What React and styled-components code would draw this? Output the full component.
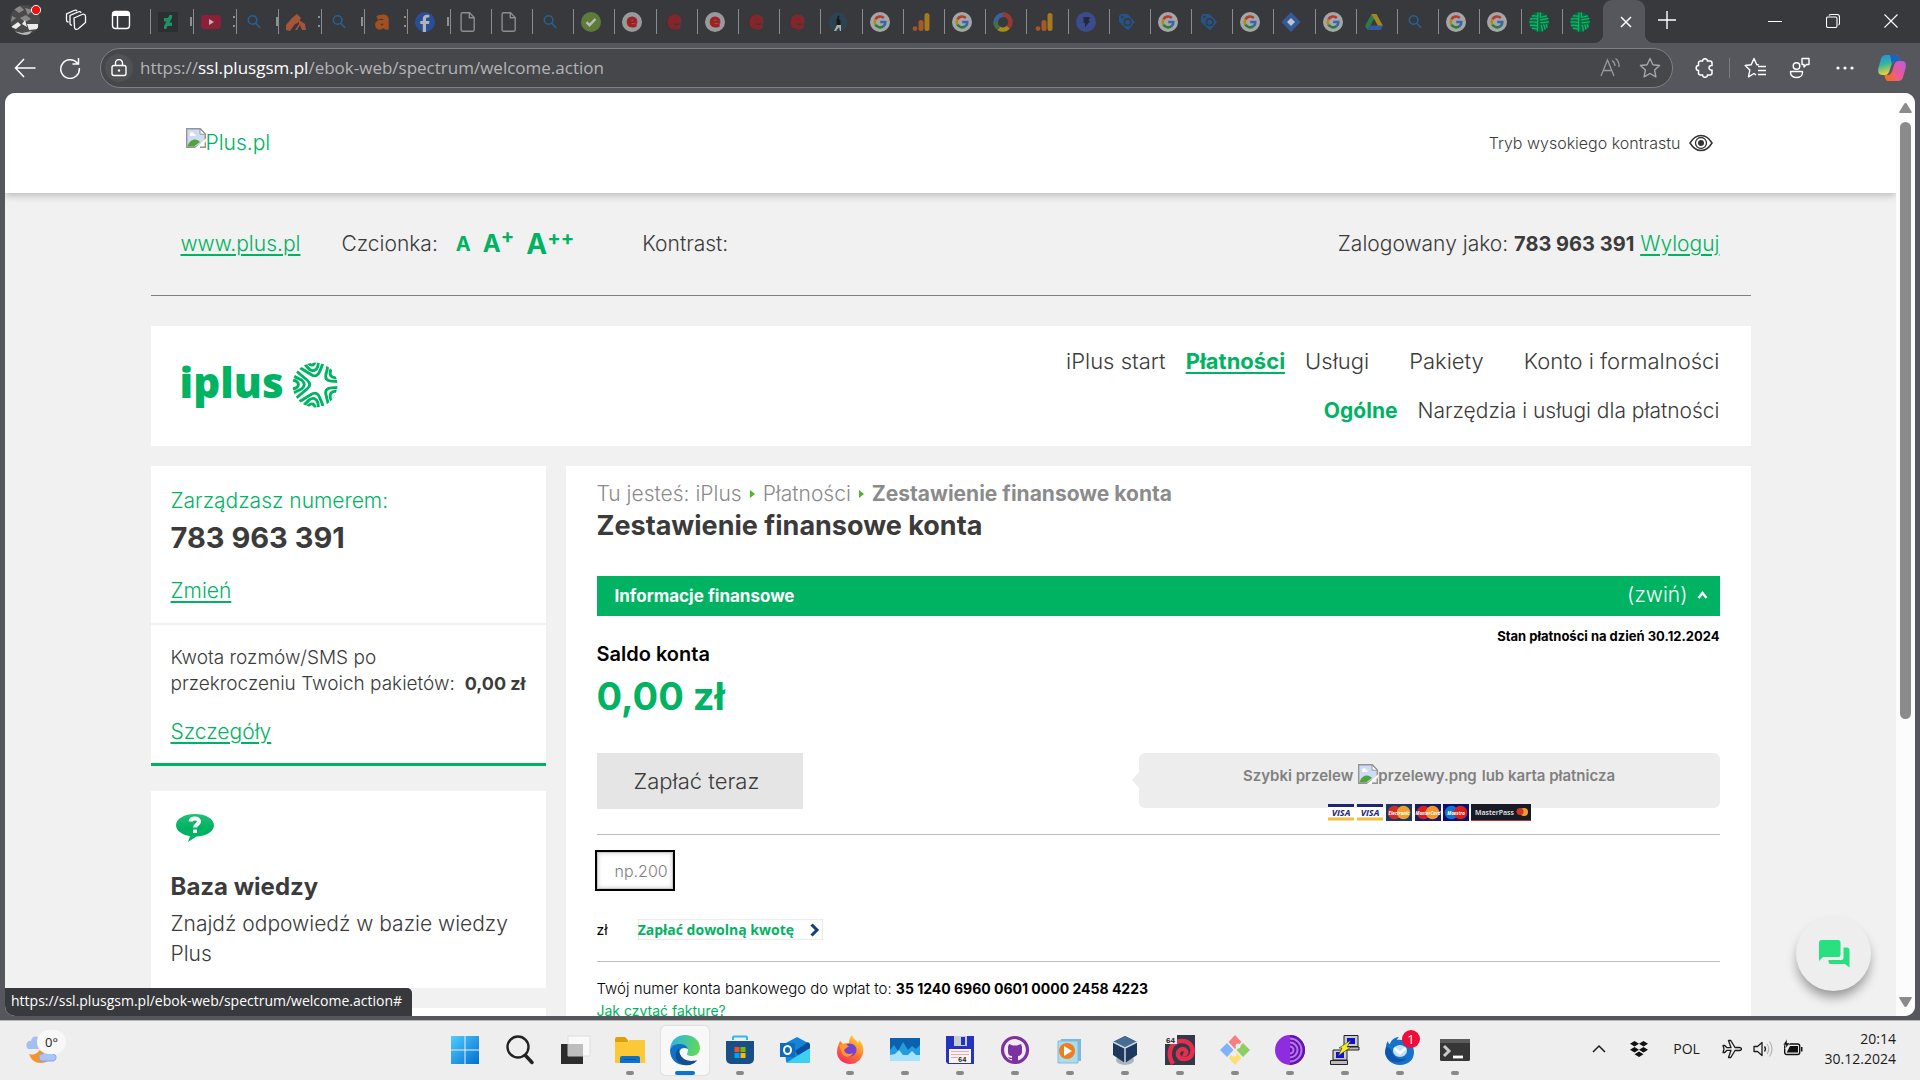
import React from "react";
import styled, { createGlobalStyle, css } from "styled-components";

const green = "#00b362";
const ink = "#3b3b3b";
const webFont = 'Inter, "Open Sans", sans-serif';
const systemFont = '"Open Sans", "Noto Sans", sans-serif';

const GlobalStyle = createGlobalStyle`
  *, *::before, *::after { box-sizing: border-box; }
  body { margin: 0; background: #56575c; font-family: ${webFont}; color: ${ink}; overflow: hidden; }
  h1, h2, p, ul { margin: 0; padding: 0; }
  b { font-weight: 700; }
  button { border: 0; padding: 0; margin: 0; background: none; color: inherit; font: inherit; cursor: pointer; }
  svg { display: block; flex: none; }
`;

/* ---------- window ---------- */

const Desktop = styled.div`
  display: flex;
  flex-direction: column;
  height: 100vh;
  background: #56575c;
`;

const TabStrip = styled.div`
  display: flex;
  flex: none;
  height: 43px;
  background: #38393d;
  color: #fff;
`;

const StripTools = styled.div`
  display: flex;
  align-items: center;
  flex: none;
  width: 150px;
  height: 40px;
  padding-left: 9px;
  gap: 24px;
`;

const Tabs = styled.div`
  display: flex;
  flex: 0 1 1453px;
  min-width: 0;
`;

const Tab = styled.button`
  display: flex;
  align-items: center;
  flex: ${(p) => (p.$wide ? 43 : 41)} 1 0;
  min-width: 0;
  height: 25px;
  margin-top: 9px;
  padding-left: 7px;
  gap: 12px;
  border-left: 1px solid #8b8c8f;
`;

const ActiveTab = styled.button`
  position: relative;
  display: grid;
  place-items: center;
  flex: none;
  width: 42px;
  height: 43px;
  padding-left: 3px;
  border-radius: 9px 9px 0 0;
  background: #56575c;
  &::before, &::after {
    content: "";
    position: absolute;
    bottom: 0;
    width: 9px;
    height: 9px;
  }
  &::before { left: -9px; background: radial-gradient(circle at 0 0, #38393d 9px, #56575c 9px); }
  &::after { right: -9px; background: radial-gradient(circle at 100% 0, #38393d 9px, #56575c 9px); }
`;

const NewTab = styled.button`
  display: grid;
  place-items: center;
  width: 44px;
  height: 40px;
`;

const WindowButtons = styled.div`
  display: flex;
  margin-left: auto;
  height: 42px;
`;

const WindowButton = styled.button`
  display: grid;
  place-items: center;
  width: 58px;
`;

const Toolbar = styled.div`
  display: flex;
  align-items: center;
  flex: none;
  height: 50px;
  color: #fff;
  font-family: ${systemFont};
`;

const NavButton = styled.button`
  display: grid;
  place-items: center;
  width: 45px;
  height: 40px;
  &:first-child { margin-left: 2px; }
  &:nth-child(2) { margin-right: 8px; }
`;

const AddressBar = styled.div`
  display: flex;
  align-items: center;
  flex: 1;
  height: 40px;
  padding: 0 2px 0 4px;
  border: 1px solid #808185;
  border-radius: 20px;
  background: #46474b;
`;

const SiteInfo = styled.button`
  display: grid;
  place-items: center;
  width: 28px;
  height: 28px;
  border-radius: 50%;
  background: #505155;
`;

const Url = styled.div`
  flex: 1;
  margin-left: 7px;
  font-size: 17px;
  line-height: 24px;
  color: #b4b4b5;
  b { color: #fff; font-weight: 400; }
`;

const PillButton = styled.button`
  display: grid;
  place-items: center;
  width: 40px;
  height: 34px;
`;

const ToolbarEnd = styled.div`
  display: flex;
  align-items: center;
  padding: 0 3px 0 9px;
`;

const ToolbarButton = styled.button`
  display: grid;
  place-items: center;
  width: ${(p) => p.$w || 45}px;
  height: 40px;
`;

const Separator = styled.span`
  width: 1px;
  height: 20px;
  background: #7b7c80;
  margin: 0 2px;
`;

const Viewport = styled.div`
  position: relative;
  display: flex;
  flex: 1;
  min-height: 0;
  margin: 0 5px;
  border-radius: 10px;
  overflow: hidden;
  background: #f1f1f1;
`;

const Page = styled.div`
  flex: 1;
  min-width: 0;
  overflow: hidden;
  font-weight: 300;
`;

const ScrollBar = styled.div`
  display: flex;
  flex-direction: column;
  align-items: center;
  flex: none;
  width: 19px;
  padding: 10px 0 9px;
  background: #fcfcfc;
`;

const Thumb = styled.div`
  width: 11px;
  height: 66%;
  margin: 9px 0 auto;
  border-radius: 6px;
  background: #8b8b8b;
`;

const StatusBubble = styled.div`
  position: absolute;
  left: 0;
  bottom: 0;
  height: 28px;
  padding: 0 10px 0 6px;
  border-radius: 0 5px 0 8px;
  background: #38393d;
  color: #fff;
  font: 14px/26px ${systemFont};
`;

const ChatButton = styled.button`
  position: absolute;
  right: 44px;
  bottom: 25px;
  display: grid;
  place-items: center;
  width: 75px;
  height: 75px;
  border-radius: 50%;
  background: #eeeeee;
  box-shadow: 0 8px 12px -2px rgba(0, 0, 0, 0.4);
`;

/* ---------- portal page ---------- */

const Container = styled.div`
  width: 1600px;
  max-width: 100%;
  margin: 0 auto;
`;

const Header = styled.header`
  position: relative;
  background: #fff;
  box-shadow: 0 2px 8px rgba(0, 0, 0, 0.25);
`;

const HeaderRow = styled(Container)`
  display: flex;
  align-items: center;
  justify-content: space-between;
  height: 100px;
  padding: 0 38px 0 35px;
`;

const BrokenImage = styled.span`
  display: inline-flex;
  align-items: flex-start;
  white-space: nowrap;
`;

const HomeLink = styled.a`
  display: flex;
  color: ${green};
  font-size: 21px;
  line-height: 30px;
  text-decoration: none;
`;

const ContrastMode = styled.button`
  display: flex;
  align-items: center;
  gap: 8px;
  font-size: 16px;
  line-height: 24px;
`;

const UtilityRow = styled(Container)`
  display: flex;
  align-items: center;
  height: 103px;
  padding: 0 31px 0 30px;
  border-bottom: 1px solid #7f8281;
  font-size: 21px;
  line-height: 30px;
`;

const GreenLink = styled.a`
  color: ${green};
  text-decoration: underline;
  text-underline-offset: 3px;
`;

const FontSizes = styled.div`
  display: flex;
  align-items: center;
  margin: 0 68px 0 41px;
`;

const FontSize = styled.button`
  margin-left: ${(p) => p.$gap}px;
  color: ${green};
  font-weight: 700;
  font-size: ${(p) => p.$size}px;
  line-height: 30px;
  sup { font-size: 20px; line-height: 0; vertical-align: 9px; }
`;

const Session = styled.div`
  margin-left: auto;
  b { font-size: 20px; }
`;

const Banner = styled(Container)`
  display: flex;
  justify-content: space-between;
  margin-top: 30px;
  padding: 20px 31px 20px 29px;
  background: #fff;
`;

const Logo = styled.a`
  display: flex;
  align-items: center;
  gap: 8px;
  height: 77px;
  color: ${green};
  font: 800 42px/60px "Open Sans", "Noto Sans", sans-serif;
  text-decoration: none;
  span { height: 66px; }
`;

const NavStack = styled.nav`
  display: flex;
  flex-direction: column;
  align-items: flex-end;
  gap: 20px;
  font-size: 21px;
`;

const NavRow = styled.div`
  display: flex;
  gap: ${(p) => p.$gap || 20}px;
  ${(p) => p.$main && css`font-size: 22px;`}
`;

const NavLink = styled.a`
  color: ${ink};
  line-height: 30px;
  text-decoration: none;
  ${(p) => p.$active && css`color: ${green}; font-weight: 700;`}
  ${(p) => p.$underline && css`text-decoration: underline; text-underline-offset: 3px;`}
`;

const Columns = styled(Container)`
  display: grid;
  grid-template-columns: 395px minmax(0, 1fr);
  gap: 20px;
  margin-top: 20px;
`;

const Sidebar = styled.aside`
  display: flex;
  flex-direction: column;
`;

const SideBox = styled.section`
  padding: 20px 20px ${(p) => p.$bottom || 16}px;
  margin-bottom: ${(p) => p.$after || 0}px;
  background: #fff;
  font-size: 21px;
  line-height: 30px;
  ${(p) => p.$closing && css`border-bottom: 3px solid ${green};`}
`;

const GreenText = styled.p`
  color: ${green};
`;

const PhoneNumber = styled.p`
  margin-bottom: 16px;
  font-size: 29px;
  font-weight: 700;
  line-height: 44px;
`;

const Overage = styled.div`
  display: flex;
  align-items: flex-end;
  justify-content: space-between;
  margin-bottom: 20px;
  font-size: 19px;
  line-height: 26px;
  b { white-space: nowrap; font-size: 18px; }
`;

const SideTitle = styled.h2`
  margin: 27px 0 7px;
  font-size: 24px;
  font-weight: 700;
  line-height: 30px;
`;

const Main = styled.main`
  padding: 13px 31px 0;
  background: #fff;
`;

const Breadcrumbs = styled.nav`
  display: flex;
  align-items: center;
  gap: 8px;
  color: #8b8b8b;
  font-size: 21px;
  line-height: 30px;
  a { color: inherit; text-decoration: none; }
`;

const Title = styled.h1`
  margin-bottom: 33px;
  font-size: 27px;
  font-weight: 700;
  line-height: 34px;
`;

const SectionBar = styled.div`
  display: flex;
  align-items: center;
  justify-content: space-between;
  height: 40px;
  padding: 0 12px 0 18px;
  background: ${green};
  color: #fff;
`;

const SectionTitle = styled.h2`
  font-size: 17px;
  font-weight: 700;
  line-height: 24px;
`;

const Collapse = styled.button`
  display: flex;
  align-items: center;
  gap: 9px;
  padding-bottom: 2px;
  font-size: 21px;
  font-weight: 300;
  line-height: 24px;
`;

const BalanceRow = styled.div`
  display: flex;
  align-items: flex-start;
  justify-content: space-between;
  padding-top: 10px;
  margin-bottom: 33px;
  color: #000;
`;

const Balance = styled.div`
  padding-top: 14px;
  font-weight: 700;
`;

const BalanceLabel = styled.p`
  font-size: 20px;
  line-height: 28px;
  font-weight: 600;
`;

const BalanceValue = styled.p`
  margin-top: 4px;
  color: ${green};
  font-size: 38px;
  line-height: 48px;
`;

const AsOf = styled.p`
  font-size: 13px;
  font-weight: 700;
  line-height: 20px;
`;

const PayRow = styled.div`
  display: flex;
  align-items: flex-start;
  justify-content: space-between;
  padding-bottom: 13px;
  border-bottom: 1px solid #bcbcbc;
`;

const PayButton = styled.button`
  width: 206px;
  height: 56px;
  padding-right: 6px;
  background: #e5e5e5;
  color: ${ink};
  font-size: 22px;
`;

const Methods = styled.div`
  display: flex;
  flex-direction: column;
  align-items: center;
  width: 581px;
`;

const Bubble = styled.div`
  position: relative;
  display: flex;
  align-items: flex-start;
  justify-content: center;
  width: 100%;
  height: 55px;
  padding-top: 11px;
  border-radius: 6px;
  background: #ededed;
  color: #808080;
  font-size: 15px;
  font-weight: 600;
  line-height: 24px;
  gap: 5px;
  &::before {
    content: "";
    position: absolute;
    left: -7px;
    top: 19px;
    border: solid transparent;
    border-width: 8px 7px 8px 0;
    border-right-color: #ededed;
  }
`;

const CardLogos = styled.div`
  position: relative;
  margin-top: -4px;
`;

const AmountField = styled.input`
  display: block;
  width: 76px;
  height: 37px;
  margin: 17px 0 30px;
  padding: 0 0 0 17px;
  border: 1px solid #c8c8c8;
  outline: 2px solid #000;
  box-shadow: inset 0 0 4px #ccc;
  background: #fff;
  color: #808080;
  font: 300 16px/20px ${webFont};
`;

const AmountRow = styled.div`
  display: flex;
  align-items: center;
  gap: 30px;
  padding-bottom: 21px;
  border-bottom: 1px solid #bcbcbc;
  color: #000;
  font-size: 14px;
  font-weight: 400;
  line-height: 21px;
`;

const PayAny = styled.button`
  display: flex;
  align-items: center;
  gap: 16px;
  height: 21px;
  padding-right: 3px;
  box-shadow: inset 0 0 2px #bbb;
  color: ${green};
  font: 700 14px/20px ${systemFont};
`;

const Account = styled.div`
  padding-top: 16px;
  color: #000;
  font-size: 14px;
  font-weight: 400;
  line-height: 22px;
  p { font-size: 15px; font-weight: 300; }
  b { font-size: 14px; }
`;

/* ---------- taskbar ---------- */

const Taskbar = styled.footer`
  display: grid;
  grid-template-columns: 1fr auto 1fr;
  flex: none;
  height: 60px;
  margin-top: 4px;
  border-top: 1px solid #b5b5b7;
  background: #eeeeee;
  color: #1b1b1b;
  font-family: ${systemFont};
`;

const Weather = styled.button`
  display: flex;
  align-items: flex-start;
  justify-self: start;
  padding: 9px 0 0 26px;
`;

const Apps = styled.div`
  display: flex;
  gap: 7px;
  padding-top: 5px;
`;

const TaskButton = styled.button`
  display: flex;
  flex-direction: column;
  align-items: center;
  justify-content: space-between;
  width: 48px;
  height: 49px;
  padding-top: 9px;
  border-radius: 5px;
  ${(p) => p.$active && css`background: #f8f8f8; box-shadow: 0 0 1px 1px #e0e0e0;`}
  &::after {
    content: "";
    width: ${(p) => (p.$active ? 20 : 8)}px;
    height: 4px;
    border-radius: 2px;
    background: ${(p) => (p.$active ? "#0a74d1" : p.$open ? "#888" : "transparent")};
  }
`;

const Tray = styled.div`
  display: flex;
  align-items: center;
  justify-self: end;
  padding: 0 24px 4px 0;
`;

const TrayButton = styled.button`
  display: grid;
  place-items: center;
  width: ${(p) => p.$w}px;
  height: 40px;
  font-size: 14px;
`;

const Clock = styled.button`
  margin-left: 16px;
  text-align: right;
  font-size: 14px;
  line-height: 20px;
`;

/* ---------- drawings ---------- */

const Svg = ({ w = 20, h = w, box, children, ...rest }) => (
  <svg width={w} height={h} viewBox={box || `0 0 ${w} ${h}`} fill="none" aria-hidden="true" {...rest}>
    {children}
  </svg>
);

const Google = () => (
  <>
    <circle cx="10" cy="10" r="10" fill="#a5a6a7" />
    <g strokeWidth="2.6">
      <path d="M5.4 7.3A5.4 5.4 0 0 1 13.8 6" stroke="#b53a30" />
      <path d="M5.4 7.3a5.6 5.6 0 0 0 0 5.4" stroke="#b28a1c" />
      <path d="M5.4 12.7a5.4 5.4 0 0 0 8.2 1.4" stroke="#2c7c41" />
      <path d="M13.6 14.1A5.3 5.3 0 0 0 15.3 10H10.2" stroke="#3566b0" />
    </g>
  </>
);
const Analytics = () => (
  <>
    <rect x="13.5" y="1" width="5" height="18" rx="2.5" fill="#a5791d" />
    <rect x="7.5" y="8" width="5" height="11" rx="2.5" fill="#a55a25" />
    <circle cx="4" cy="16.6" r="2.4" fill="#a5532a" />
  </>
);
const Find = () => (
  <g stroke="#28608f" strokeWidth="1.6" strokeLinecap="round">
    <circle cx="8.6" cy="8" r="4.3" />
    <path d="M11.8 11.3l4 4.2" />
  </g>
);
const Doc = () => <path d="M4.5.8h7l4.7 4.8v12.2a1.4 1.4 0 0 1-1.4 1.4H4.5a1.4 1.4 0 0 1-1.4-1.4V2.2A1.4 1.4 0 0 1 4.5.8zM11.3 1v4.8H16" stroke="#8c8d90" strokeWidth="1.4" />;
const Letter = ({ y, size, fill, children }) => (
  <text x="10" y={y} fontSize={size} fontWeight="800" textAnchor="middle" fill={fill} stroke={fill} strokeWidth=".8" fontFamily="Open Sans, sans-serif">{children}</text>
);
const EBadge = () => (<><circle cx="10" cy="10" r="10" fill="#999a9c" /><Letter y={15} size={18} fill="#9d2025">e</Letter></>);
const Tag = () => (
  <>
    <path d="M2 4l2-2h6.5l7.5 8-6.5 8-1.5-.5L2 10z" fill="#265489" />
    <circle cx="10.6" cy="10.2" r="3.3" stroke="#38393d" strokeWidth="1.6" />
    <circle cx="5.3" cy="5" r="1.2" fill="#38393d" />
  </>
);
const PlusGlobe = () => (
  <>
    <circle cx="10" cy="10" r="10" fill="#096b40" />
    <g stroke="#12b46a" strokeWidth="1.3">
      <path d="M9 .5c-.5 5-.3 8-.5 19M1 7c3-.5 5-.5 7.5 0M.5 10c3-.5 5-.2 8 .4M1 13.500c3-.6 5-.2 7.500.6M3 16.500c2-.3 4 0 5.500.8M3 4c2-.4 4-.2 6 .4M11.500.5c-.3 2-.2 3-.1 4.800L18 3.800M11.300 8l8-1.700M11.300 10.800l8.500-.9M12 13c1 2 1.500 4 1.300 6.400M14.500 12.500c1 1.500 1.500 3 1.500 5M17 12.300c.7 1 1 2 1 3.500" />
    </g>
  </>
);

const favicons = {
  deviant: <><rect width="20" height="20" fill="#2c2e31" /><path d="M14 3v3l-2.600 4.600H14V14H9.500L8.300 17H6v-3l2.500-4.500H6V6h4l1.500-3z" fill="#1f9167" /></>,
  youtube: <><rect y="3" width="20" height="14" rx="4" fill="#8d2038" /><path d="M8 7v6l5-3z" fill="#b5b5b5" /></>,
  find: <Find />,
  house: <path d="M0 18V13l6-7 5-4 4 4-3 5-3 1-5 7zM13 8l6 4 1 6h-4l-2-5-3 5H9l4-6z" fill="#a75437" />,
  amazon: <Letter y={17} size={24} fill="#a25020">a</Letter>,
  facebook: <><circle cx="10" cy="10" r="10" fill="#284f95" /><path d="M11 20v-8h3l.5-3H11V7.200c0-1 .5-1.600 1.700-1.600h1.600V3.100c-3.800-.8-6.500.4-6.500 3.800V9H5.300v3h2.500v8z" fill="#b2b4b8" /></>,
  doc: <Doc />,
  check: <><circle cx="10" cy="10" r="10" fill="#5e7b39" /><path d="M5.500 10.200l3 3 6-6.200" stroke="#b9bdb4" strokeWidth="2.400" /></>,
  ebadge: <EBadge />,
  e: <Letter y={17} size={24} fill="#85252b">e</Letter>,
  person: <><circle cx="10" cy="10" r="9.500" fill="#2d4450" /><path d="M10 3.500a1.500 1.500 0 1 1 0 3 3 3 0 0 1 2.500 3V13H8.500V8z" fill="#17191b" /><path d="M9 13l-3 6h2l3-4 1 4h1V13z" fill="#b1aea6" /></>,
  google: <Google />,
  analytics: <Analytics />,
  ring: <g strokeWidth="4.500"><path d="M3 12a7.500 7.500 0 0 1 9-9" stroke="#3a6298" /><path d="M10 2.500a7.500 7.500 0 0 1 5.500 12.500" stroke="#9b3732" /><path d="M15.300 15.300a7.500 7.500 0 0 1-9.600 1" stroke="#a98a1d" /><path d="M5.900 16.300A7.500 7.500 0 0 1 2.500 10" stroke="#457142" /></g>,
  bolt: <><circle cx="10" cy="10" r="10" fill="#3b4c8d" /><path d="M7.500 5h6.500l-1.500 4H14L9 15.500v-4.500H7.500z" fill="#25283a" /></>,
  tag: <Tag />,
  diamond: <><path d="M10 0l9.500 10L10 20 .5 10z" fill="#35599b" /><path d="M10 6l4 4-4 4-4-4z" fill="#c0c3c9" /></>,
  drive: <><path d="M7.500 2h5L6 14.500 3.500 18 1 14z" fill="#2f7a49" /><path d="M7.500 2h5L19 14h-5z" fill="#a58625" /><path d="M6 13.500h13L16.500 18h-13z" fill="#33599d" /></>,
  plus: <PlusGlobe />,
};

const tabs = [
  ["deviant", 1], ["youtube", 1], ["find", 1], ["house", 1], ["find", 1], ["amazon", 1], ["facebook", 1],
  ..."doc doc find check ebadge e ebadge e e person google analytics google ring analytics bolt tag google tag google diamond google drive find google google plus plus"
    .split(" ").map((n) => [n, 0]),
];

const PageIcon = ({ size = 20 }) => (
  <Svg w={size} box="0 0 20 20">
    <path d="M.7.7h13.600L19.300 6v7L9 19.300H.7z" fill="#cfdcf5" stroke="#949494" strokeWidth="1.400" />
    <path d="M14 1v5.200h5.200z" fill="#fff" stroke="#949494" />
    <path d="M4 6.500a2 2 0 0 1 4-.6 1.500 1.500 0 0 1 1.500 2H4z" fill="#fff" />
    <path d="M1.500 18.500c1.500-5 4-7 7.500-7 2 0 3.500 1 5 2.500l-6 4.500z" fill="#52a43a" />
    <path d="M9 20L20 10.500V13l-7 7z" fill="#fff" />
    <path d="M14 19.300h5.300V14.500" stroke="#949494" strokeWidth="1.400" />
  </Svg>
);

const Eye = () => (
  <Svg w={24} h={18}>
    <path d="M1 9c6-10 16-10 22 0-6 10-16 10-22 0z" stroke="#333" strokeWidth="1.500" />
    <circle cx="12" cy="9" r="5.500" stroke="#333" strokeWidth="1.300" />
    <circle cx="12" cy="9" r="3" fill="#333" />
  </Svg>
);

const LogoGlobe = () => (
  <Svg w={46} h={46}>
    <clipPath id="globe"><circle cx="23" cy="23" r="22.500" /></clipPath>
    <g clipPath="url(#globe)" stroke={green} strokeWidth="2.900">
      {[54, 126, 198, 270, 342].map((a) => (
        <g key={a} transform={`translate(27 22.500) rotate(${a})`}>
          <path d="M-18-28L-4.500-12Q0-6.500 4.500-12L18-28" />
          <path d="M-13-31Q-8-26-4.500-17.500Q0-12 4.500-17.500Q8-26 13-31" />
          <path d="M-8-34Q-5-28-3.500-23Q0-18 3.500-23Q5-28 8-34" />
        </g>
      ))}
    </g>
  </Svg>
);

const HelpBubble = () => (
  <Svg w={48} h={34}>
    <defs><linearGradient id="help" x2="0" y2="1"><stop stopColor="#23bf78" /><stop offset=".5" stopColor={green} /></linearGradient></defs>
    <path d="M24 3c10.500 0 19 4.800 19 11.300 0 6.200-8 11.200-17.500 11.200L17 31l2-5.800C11 24 5 19.500 5 14.300 5 7.800 13.500 3 24 3z" fill="url(#help)" />
    <path d="M19.500 10.500c.5-4 8.500-4 8.500 0 0 3-4 3-4 6M24 18.500v3.500" stroke="#fff" strokeWidth="4" />
  </Svg>
);

const CardLabel = ({ x, y, fill = "#fff", size = 6, children }) => (
  <text x={x} y={y} fill={fill} fontSize={size} fontWeight="700" fontStyle="italic" textAnchor="middle" fontFamily="Open Sans, sans-serif">{children}</text>
);

const Cards = () => (
  <Svg w={203} h={17}>
    {[0, 29].map((x) => (
      <g key={x}>
        <path fill="#fff" d={`M${x} 0h26v17h-26z`} />
        <path fill="#1d2375" d={`M${x} 0h26v3h-26z`} />
        <path fill="#f4bd3c" d={`M${x} 13.500h26v3h-26z`} />
        <CardLabel x={x + 13} y={11.500} size={9} fill="#1d2375">VISA</CardLabel>
      </g>
    ))}
    {[[58, "#1e3764", "#d22d25", "#eda02a", "Electronic"], [87, "#1a1c6b", "#d5201f", "#f0992a", "MasterCard"], [115, "#0d0f6e", "#1672d2", "#d5201f", "Maestro"]].map(([x, bg, a, b, name]) => (
      <g key={x}>
        <path fill={bg} d={`M${x} 0h26v17h-26z`} />
        <circle cx={x + 8.500} cy="8.500" r="6.800" fill={a} />
        <circle cx={x + 17.500} cy="8.500" r="6.800" fill={b} />
        <CardLabel x={x + 13} y={10.500} size={4.500}>{name}</CardLabel>
      </g>
    ))}
    <path fill="#181a26" d="M143 0h60v17h-60z" /><path fill="#b53b2d" d="M143 16h60v1h-60z" />
    <text x="147" y="11" fill="#eee" fontSize="7" fontWeight="600" fontFamily="Open Sans, sans-serif">MasterPass</text>
    <circle cx="196" cy="8" r="4" fill="#eda02a" /><circle cx="192" cy="7.500" r="3.500" fill="#d2341f" />
  </Svg>
);

const Copilot = () => (
  <Svg w={28} h={28}>
    <defs>
      <linearGradient id="cpa" x2="0.300" y2="1"><stop stopColor="#1b8fe8" /><stop offset=".5" stopColor="#38b59d" /><stop offset="1" stopColor="#f3d32f" /></linearGradient>
      <linearGradient id="cpb" x1="1" x2="0" y2="1"><stop stopColor="#b45fe8" /><stop offset=".5" stopColor="#ea5796" /><stop offset="1" stopColor="#f97a32" /></linearGradient>
    </defs>
    <path d="M8 1h9c3 0 4 2 5 6h-4c-3 0-4 2-5 5l-2 6c-1 2-2 3-4 3H4c-4 0-4.500-4-3.300-8L3 5c.8-3 2.500-4 5-4z" fill="url(#cpa)" />
    <path d="M12 1h5c3 0 4 2 5 6h-4c-2.500 0-3.500 1-4.200 3z" fill="#1763c7" />
    <path d="M20 27h-9c-3 0-3.500-2-4.500-6H10c3 0 3.500-2 4.500-5l2-6c1-2 2-3 4-3H24c4 0 4.500 4 3.300 8L25 23c-.8 3-2.500 4-5 4z" fill="url(#cpb)" />
    <path d="M16.500 27H11c-3 0-3.500-2-4.500-6H10c2.500 0 3.300-1 4-3z" fill="#f26a37" />
  </Svg>
);

const apps = [
  ["Start", 0, <>
    <defs><linearGradient id="win" x2="1" y2="1"><stop stopColor="#52cbff" /><stop offset="1" stopColor="#0070d0" /></linearGradient></defs>
    <path d="M1 1h13.500v13.500H1zM15.500 1H29v13.500H15.500zM1 15.500h13.500V29H1zM15.500 15.500H29V29H15.500z" fill="url(#win)" />
  </>],
  ["Wyszukaj", 0, <g stroke="#222" strokeLinecap="round"><circle cx="13" cy="12" r="10.500" strokeWidth="2.400" /><path d="M20.500 20.500l6.500 7" strokeWidth="3.500" /></g>],
  ["Widok zadań", 0, <><path d="M1 9h22v20H1z" fill="#2c2c2c" /><path d="M8 1h22v20H8z" fill="#fbfbfb" opacity=".85" stroke="#ddd" /><path d="M8 9h15v12H8z" fill="#bdbdbd" /></>],
  ["Eksplorator", 1, <><path d="M0 4a2 2 0 0 1 2-2h8l3 3v6H0z" fill="#dda00b" /><path d="M0 7h12l3-2h15v23H0z" fill="#fcc835" /><path d="M5 28v-5a2 2 0 0 1 2-2h16a2 2 0 0 1 2 2v5z" fill="#0e72c9" /><path d="M9 24.500h12" stroke="#07539a" /></>],
  ["Edge", 2, <>
    <defs><linearGradient id="edge" x2="1" y1=".3" y2=".5"><stop stopColor="#2cb3e8" /><stop offset="1" stopColor="#62d956" /></linearGradient></defs>
    <path d="M0 14C1 5 7 0 15 0c9 0 15 6 15 13 0 5-4 8-8 8-4 0-5-1-5-2 0-1 1-1.500 1-4 0-3-3-5-6-5C6 10 1 12 0 14z" fill="url(#edge)" />
    <path d="M0 15c1-4 5-6 10-6 5 0 8 3 8 5-6-3-9 1-9 5 0 6 6 9 11 9 3 0 6-2 7-2.500C24 29 20 30 15 30 6 30 0 24 0 15z" fill="#1072c6" />
    <path d="M9 13c-6 6-4 14 5 17 6 1 10-1 13-5-5 2-18 2-18-12z" fill="#124f93" />
  </>],
  ["Sklep", 1, <><path d="M8 5V2.500a1 1 0 0 1 1-1h12a1 1 0 0 1 1 1V5" stroke="#2fb5f2" strokeWidth="2" /><path d="M1 6h28v18a5 5 0 0 1-5 5H6a5 5 0 0 1-5-5z" fill="#174f86" /><path d="M9.500 12h5v5h-5z" fill="#f25022" /><path d="M15.500 12h5v5h-5z" fill="#7fba00" /><path d="M9.500 18h5v5h-5z" fill="#00a4ef" /><path d="M15.500 18h5v5h-5z" fill="#ffb900" /></>],
  ["Outlook", 0, <><path d="M4 9l13-7 13 7v17a2 2 0 0 1-2 2H8a2 2 0 0 1-2-2z" fill="#1385d8" /><path d="M6 28l24-15v13a2 2 0 0 1-2 2z" fill="#3ed0f2" /><path d="M15 16l13-9 2 2v4L18 20z" fill="#0a4f9e" /><path d="M0 8h15v14H0z" fill="#0f6cbd" /><ellipse cx="7.500" cy="15" rx="3.500" ry="4" stroke="#fff" strokeWidth="2" /></>],
  ["Firefox", 1, <>
    <defs><linearGradient id="ff" x1=".8" x2=".2" y2="1"><stop stopColor="#ffdf3c" /><stop offset=".5" stopColor="#ff7a2b" /><stop offset="1" stopColor="#f0296b" /></linearGradient></defs>
    <path d="M17 0c1 4 5 5 6 8l1-3c4 4 5 8 4 13-1 6-6 11-13 11S2 24 2 17c0-5 2-8 3-11l3 3c2-1 4-1 6-1 0-3 1-6 3-8z" fill="url(#ff)" />
    <circle cx="15" cy="15" r="6.500" fill="#7543d4" /><path d="M4 10c4-2 8-1 10 2-3 0-3 2-5 3 1 4 5 5 9 3-2 5-9 5-11 0z" fill="#ff9a2a" />
  </>],
  ["Monitor", 1, <><path d="M0 3h30v23H0z" fill="#0c61ae" /><path d="M0 15l4-5 4 6 5-9 5 8 4-4 4 3 4-4v16H0z" fill="#249ddf" /><path d="M0 20l5-1 4-4 4 5 5 0 4-4 4 4h4v6H0z" fill="#a8e2fb" /></>],
  ["Total Commander", 1, <><path d="M1 1h28v28H3l-2-2z" fill="#2434c0" /><path d="M9 1h13v10H9z" fill="#c9ccd4" /><path d="M16 2h4v8h-4z" fill="#2434c0" /><path d="M4 14h22v14H4z" fill="#fbf4f2" /><path d="M6 16.500h18M6 19.500h18M6 22.500h7" stroke="#ecaaa4" /><text x="13" y="27" fontSize="7" fontWeight="700" fill="#222" fontFamily="Liberation Mono, monospace">64</text></>],
  ["GitHub", 1, <><circle cx="15" cy="15" r="12.500" fill="#f1ebf6" stroke="#7c33a0" strokeWidth="3.200" /><path d="M9 9l4 1.500h4L21 9l1 3v5c0 2-2 4-4 4v6h-6v-3c-2 .5-3-.5-4-2l4 1v-2c-3 0-4-2-4-4v-5z" fill="#7c33a0" /></>],
  ["Odtwarzacz", 1, <><path d="M6 4h20v22H6z" fill="#7db7d9" /><path d="M3 6h20v22H3z" fill="#aadcf0" stroke="#84bad5" /><circle cx="12" cy="16" r="8" fill="#f07d1c" /><path d="M9 11v10l8-5z" fill="#fff" /></>],
  ["VirtualBox", 1, <><ellipse cx="15" cy="25" rx="9" ry="5" fill="#a9b4bf" /><path d="M3 7l12-6 12 6v13l-12 8-12-8z" fill="#1e395d" /><path d="M3 7l12-6 12 6-12 6z" fill="#466c94" /><path d="M3 7l12 6v15M27 7l-12 6" stroke="#cbd6e2" strokeWidth="1.500" /></>],
  ["Ruby", 1, <><path d="M0 0h30v30H0z" fill="#333a45" /><path d="M8 29C1 18 6 6 17 6c9 0 12 8 10 13-2 6-12 7-14 1-1-5 5-8 8-4 1 2-1 4-3 3" stroke="#e52e4d" strokeWidth="4.400" /><path d="M0 0h12v9H0z" fill="#eee" /><text x="1" y="8" fontSize="8" fontWeight="700" fill="#222" fontFamily="Liberation Sans, sans-serif">64</text></>],
  ["Git", 1, <><path d="M15 0l6.500 7-6.500 7-6.500-7z" fill="#f48080" /><path d="M7 8l6.500 7L7 22 0 15z" fill="#80b1fb" /><path d="M23 8l7 7-7 7-6.500-7z" fill="#8dcf62" /><path d="M15 16l6.500 7-6.500 7-6.500-7z" fill="#fbdf76" /><circle cx="18" cy="11" r="2.500" fill="#eee" /><circle cx="14" cy="19" r="2.500" fill="#eee" /></>],
  ["Tor", 1, <><circle cx="15" cy="15" r="15" fill="#8e2de0" /><path d="M15 0a15 15 0 0 1 0 30z" fill="#6115ab" /><g stroke="#b976f0" strokeWidth="2"><path d="M15 3.500a11.500 11.500 0 0 1 0 23M15 7.500a7.500 7.500 0 0 1 0 15M15 11.500a3.500 3.500 0 0 1 0 7" /></g></>],
  ["PuTTY", 1, <><g stroke="#222"><path d="M14 .5h14v11H14z" fill="#ccc" /><path d="M12 12h17v3H12z" fill="#bbb" /><path d="M3 15h14v10H3z" fill="#ccc" /><path d="M.5 25.500h17v4H.5z" fill="#bbb" /></g><path d="M17 3h8v6h-8zM6 17h8v6H6z" fill="#1010d8" /><path d="M21 5l-4 7h4L8 21l4-8H9z" fill="#f2ef1c" stroke="#333" strokeWidth=".6" /></>],
  ["Thunderbird", 1, <><path d="M1 12c0-3 1-5 2-6 0 2 1 3 2 3 1-4 5-7 9-7-1 1-2 2-2 3 9-1 17 4 17 12 0 8-6 13-14 13S0 24 0 17z" fill="#1672cb" /><path d="M1 12c3 0 5 2 6 5 2 6 8 9 15 6-6 7-20 6-22-6z" fill="#0f55ad" /><ellipse cx="15" cy="16" rx="7" ry="6" fill="#c5e2f8" /><path d="M9 13l6 5 6-5" stroke="#fff" strokeWidth="2.500" /><circle cx="26" cy="4" r="9" fill="#f00c3b" /><text x="26" y="9" fontSize="13" textAnchor="middle" fill="#fff" fontFamily="Open Sans, sans-serif">1</text></>],
  ["Terminal", 1, <><rect y="4" width="30" height="22" rx="1.500" fill="#363636" /><path d="M0 4h30v4H0z" fill="#5b5b5b" /><path d="M4 11l5 5-5 5" stroke="#c9c9c9" strokeWidth="3" /><path d="M13 22h10" stroke="#fff" strokeWidth="2.800" /></>],
];

const white = { stroke: "#fff", strokeWidth: 1.4 };

const BrowserTabs = () => (
  <TabStrip>
    <StripTools>
      <button aria-label="Profil">
        <Svg w={32} h={32}>
          <clipPath id="face"><circle cx="16" cy="16" r="15" /></clipPath>
          <g clipPath="url(#face)">
            <path d="M0 0h32v32H0z" fill="#4a4a4a" />
            <path d="M5 5l6-3 4 4-5 3zM16 4l8 2-5 5zM3 12l4 2-5 4zM11 14l6-3 5 4-6 3z" fill="#888" />
            <path d="M2 23l7-5 3 3-5 4zM18 20h11v5l-9 1zM13 20l3-4 2 7z" fill="#ececec" />
            <path d="M5 27l8 2 10-2-4 5H8z" fill="#b6b6b6" />
          </g>
          <circle cx="27" cy="6" r="4.600" fill="#f01010" stroke="#fff" />
        </Svg>
      </button>
      <button aria-label="Obszary robocze">
        <Svg w={22} h={22}><g {...white} strokeWidth="1.300"><path d="M9 9l8-3.500c2-.8 3.500 0 3.500 2v6L13 20c-2 1-3.500 0-3.500-1.500z" /><path d="M7 16c-1.500.3-2-.5-2-2V6.500L13 3c1.500-.7 2.700-.4 3 .8M3.500 13c-1.500 0-2-.5-2-2V5L9 1.500c1.500-.7 2.500-.4 3 .6" /></g></Svg>
      </button>
      <button aria-label="Karty pionowe">
        <Svg w={20} h={20}><rect x="1.500" y="1.500" width="17" height="17" rx="3" {...white} /><path d="M1.500 6V4a2.500 2.500 0 0 1 2.500-2.500h12A2.500 2.500 0 0 1 18.500 4v2z" fill="#fff" /><path d="M6.500 6v12" {...white} /></Svg>
      </button>
    </StripTools>
    <Tabs>
      {tabs.map(([name, wide], i) => (
        <Tab key={i} $wide={wide} aria-label={`Karta ${i + 1}`}>
          <Svg w={20} overflow="visible">{favicons[name]}</Svg>
          {wide ? <Svg w={2} h={12}><path d={i % 2 ? "M1 0v2M1 9v2" : "M1 1v9"} stroke="#e8e8e8" /></Svg> : null}
        </Tab>
      ))}
    </Tabs>
    <ActiveTab aria-label="Zamknij kartę"><Svg w={12}><path d="M1 1l10 10M11 1L1 11" {...white} strokeWidth="1.500" /></Svg></ActiveTab>
    <NewTab aria-label="Nowa karta"><Svg w={18}><path d="M9 0v18M0 9h18" {...white} /></Svg></NewTab>
    <WindowButtons>
      <WindowButton aria-label="Minimalizuj"><Svg w={14}><path d="M0 7.500h14" {...white} strokeWidth="1" /></Svg></WindowButton>
      <WindowButton aria-label="Przywróć"><Svg w={14}><rect x=".5" y="3" width="10.500" height="10.500" rx="1.500" {...white} strokeWidth="1.100" /><path d="M3 1.500Q3.500.5 5 .5h6a2.500 2.500 0 0 1 2.500 2.500v6q0 1.500-1 2" {...white} strokeWidth="1.100" /></Svg></WindowButton>
      <WindowButton aria-label="Zamknij"><Svg w={14}><path d="M.5.5l13 13M13.500.5l-13 13" {...white} strokeWidth="1.100" /></Svg></WindowButton>
    </WindowButtons>
  </TabStrip>
);

const BrowserToolbar = () => (
  <Toolbar>
    <NavButton aria-label="Wstecz"><Svg w={22}><path d="M10 2L1.500 11l8.500 9M2 11h19.500" {...white} strokeWidth="1.500" /></Svg></NavButton>
    <NavButton aria-label="Odśwież"><Svg w={22}><path d="M18.500 6.500A9.300 9.300 0 1 0 20.300 11M19.500 1v6h-6" {...white} strokeWidth="1.500" /></Svg></NavButton>
    <AddressBar>
      <SiteInfo aria-label="Informacje o witrynie"><Svg w={18}><rect x="2" y="6.500" width="14" height="10" rx="2" {...white} /><path d="M5.500 6.500V4a3.500 3.500 0 0 1 7 0v2.500" {...white} /><circle cx="9" cy="11.500" r="1.200" fill="#fff" /></Svg></SiteInfo>
      <Url>https://<b>ssl.plusgsm.pl</b>/ebok-web/spectrum/welcome.action</Url>
      <PillButton aria-label="Czytaj na głos"><Svg w={20}><path d="M1 18L7.500 2 14 18M3.300 12.500h8.500M12 2.500q3 2 3 5.500M15.500 .5q4 3 3.500 8.500" stroke="#999a9c" strokeWidth="1.300" /></Svg></PillButton>
      <PillButton aria-label="Dodaj do ulubionych"><Svg w={22}><path d="M11 1.500l2.900 6.200 6.700.8-5 4.600 1.300 6.700L11 16.500l-5.900 3.300 1.300-6.700-5-4.600 6.700-.8z" stroke="#a5a6a8" strokeWidth="1.400" strokeLinejoin="round" /></Svg></PillButton>
    </AddressBar>
    <ToolbarEnd>
      <ToolbarButton aria-label="Rozszerzenia"><Svg w={20}><path d="M5.500 3h2q0-2.300 2.500-2.300T12.500 3H15a2 2 0 0 1 2 2v2.500c-4-.3-4 5 0 4.700V15a2 2 0 0 1-2 2h-2.500q0 2.300-2.500 2.300T7.500 17h-2a2 2 0 0 1-2-2v-2.500q-2.300 0-2.300-2.500t2.300-2.500V5a2 2 0 0 1 2-2z" {...white} strokeWidth="1.500" /></Svg></ToolbarButton>
      <Separator />
      <ToolbarButton aria-label="Ulubione"><Svg w={22}><path d="M12 18l-2-1.500-5.500 3.300 1.300-6.700-4.600-4.600 6-.8 2.800-6.200 2.800 6.200h2M14 9.500h8M14 13.500h8M14 17.500h8" {...white} strokeLinejoin="round" /></Svg></ToolbarButton>
      <ToolbarButton aria-label="Udostępnij"><Svg w={22}><circle cx="7.500" cy="9" r="3.300" {...white} /><path d="M1.500 14.500h12v1c0 3-2.500 5-6 5s-6-2-6-5zM13 1.500h7v6h-2.500L15 10V7.500h-2z" {...white} strokeLinejoin="round" /></Svg></ToolbarButton>
      <ToolbarButton aria-label="Więcej"><Svg w={18} h={4}><circle cx="2" cy="2" r="1.600" fill="#fff" /><circle cx="9" cy="2" r="1.600" fill="#fff" /><circle cx="16" cy="2" r="1.600" fill="#fff" /></Svg></ToolbarButton>
      <ToolbarButton $w={50} aria-label="Copilot"><Copilot /></ToolbarButton>
    </ToolbarEnd>
  </Toolbar>
);

const Crumb = () => <Svg w={5} h={8}><path d="M0 0l5 4-5 4z" fill="#4eb52f" /></Svg>;

const Portal = () => (
  <Page>
    <Header>
      <HeaderRow>
        <HomeLink href="#"><BrokenImage><PageIcon />Plus.pl</BrokenImage></HomeLink>
        <ContrastMode>Tryb wysokiego kontrastu <Eye /></ContrastMode>
      </HeaderRow>
    </Header>
    <UtilityRow>
      <GreenLink href="#">www.plus.pl</GreenLink>
      <FontSizes>
        Czcionka:
        <FontSize $size={20} $gap={18}>A</FontSize>
        <FontSize $size={24} $gap={12}>A<sup>+</sup></FontSize>
        <FontSize $size={28} $gap={12}>A<sup>++</sup></FontSize>
      </FontSizes>
      <span>Kontrast:</span>
      <Session>Zalogowany jako: <b>783 963 391</b> <GreenLink href="#">Wyloguj</GreenLink></Session>
    </UtilityRow>
    <Banner>
      <Logo href="#"><span>iplus</span><LogoGlobe /></Logo>
      <NavStack>
        <NavRow $main>
          <NavLink href="#">iPlus start</NavLink>
          <NavLink href="#" $active $underline>Płatności</NavLink>
          <NavRow $main $gap={40}>
            <NavLink href="#">Usługi</NavLink>
            <NavLink href="#">Pakiety</NavLink>
            <NavLink href="#">Konto i formalności</NavLink>
          </NavRow>
        </NavRow>
        <NavRow>
          <NavLink href="#" $active>Ogólne</NavLink>
          <NavLink href="#">Narzędzia i usługi dla płatności</NavLink>
        </NavRow>
      </NavStack>
    </Banner>
    <Columns>
      <Sidebar>
        <SideBox $bottom={17} $after={2}>
          <GreenText>Zarządzasz numerem:</GreenText>
          <PhoneNumber>783 963 391</PhoneNumber>
          <GreenLink href="#">Zmień</GreenLink>
        </SideBox>
        <SideBox $closing $after={25}>
          <Overage><span>Kwota rozmów/SMS po<br />przekroczeniu Twoich pakietów:</span><b>0,00 zł</b></Overage>
          <GreenLink href="#">Szczegóły</GreenLink>
        </SideBox>
        <SideBox $bottom={19} $after={20}>
          <HelpBubble />
          <SideTitle>Baza wiedzy</SideTitle>
          <p>Znajdź odpowiedź w bazie wiedzy Plus</p>
        </SideBox>
        <SideBox />
      </Sidebar>
      <Main>
        <Breadcrumbs>
          <span>Tu jesteś: <a href="#">iPlus</a></span><Crumb /><a href="#">Płatności</a><Crumb /><b>Zestawienie finansowe konta</b>
        </Breadcrumbs>
        <Title>Zestawienie finansowe konta</Title>
        <SectionBar>
          <SectionTitle>Informacje finansowe</SectionTitle>
          <Collapse>(zwiń) <Svg w={11} h={8}><path d="M1.500 7l4-5 4 5" stroke="#fff" strokeWidth="2.400" /></Svg></Collapse>
        </SectionBar>
        <BalanceRow>
          <Balance>
            <BalanceLabel>Saldo konta</BalanceLabel>
            <BalanceValue>0,00 zł</BalanceValue>
          </Balance>
          <AsOf>Stan płatności na dzień 30.12.2024</AsOf>
        </BalanceRow>
        <PayRow>
          <PayButton>Zapłać teraz</PayButton>
          <Methods>
            <Bubble>Szybki przelew <BrokenImage><PageIcon />przelewy.png</BrokenImage> lub karta płatnicza</Bubble>
            <CardLogos><Cards /></CardLogos>
          </Methods>
        </PayRow>
        <AmountField type="text" aria-label="Kwota" placeholder="np.200" defaultValue="np.200" />
        <AmountRow>
          zł
          <PayAny>Zapłać dowolną kwotę <Svg w={10} h={14}><path d="M1.500 1.500L7 7l-5.500 5.500" stroke="#123f7c" strokeWidth="3" /></Svg></PayAny>
        </AmountRow>
        <Account>
          <p>Twój numer konta bankowego do wpłat to: <b>35 1240 6960 0601 0000 2458 4223</b></p>
          <GreenLink href="#">Jak czytać fakturę?</GreenLink>
        </Account>
      </Main>
    </Columns>
  </Page>
);

const WindowsTaskbar = () => (
  <Taskbar>
    <Weather aria-label="Pogoda">
      <Svg w={40} h={36}>
        <path d="M3 24c5 2 12-1 13-12 13 4 12 21-1 21-6 0-10-3-12-9z" fill="#f3952d" />
        <path d="M2 19c-4-4 0-9 3-8 1-7 9-5 10 0v8z" fill="#a4c0f0" />
        <path d="M15 31c-4-3-1-8 2-7 2-6 9-5 10 0 4 0 4 7 0 7z" fill="#a9c5f5" stroke="#86a4e4" />
        <rect x="11" width="29" height="24" rx="12" fill="#f8f8f8" />
        <text x="19" y="17" fontSize="13" fill="#1b1b1b" fontFamily="Open Sans, sans-serif">0°</text>
      </Svg>
    </Weather>
    <Apps>
      {apps.map(([name, state, art]) => (
        <TaskButton key={name} aria-label={name} $open={state === 1} $active={state === 2}>
          <Svg w={30} overflow="visible">{art}</Svg>
        </TaskButton>
      ))}
    </Apps>
    <Tray>
      <TrayButton $w={40} aria-label="Ukryte ikony"><Svg w={14} h={9}><path d="M1 8l6-6 6 6" stroke="#1b1b1b" strokeWidth="1.500" /></Svg></TrayButton>
      <TrayButton $w={40} aria-label="Dropbox"><Svg w={18} h={16}><path d="M4.500 0L9 2.700 4.500 5.500 0 2.700zM13.500 0L18 2.700l-4.500 2.800L9 2.700zM4.500 6L9 8.700l-4.500 2.800L0 8.700zM13.500 6L18 8.700l-4.500 2.800L9 8.700zM9 10.500l4.500 2.700L9 16l-4.500-2.800z" fill="#111" /></Svg></TrayButton>
      <TrayButton $w={56}>POL</TrayButton>
      <TrayButton $w={34} aria-label="Tryb samolotowy"><Svg w={20}><path d="M1 6.500h1.800L5 8.700h4L6.500 1.500h2.300L13 8.500h4.500q2 .3 2 1.500t-2 1.500H13l-4.200 7H6.500L9 11.300H5L2.800 13.500H1L2 10z" stroke="#1b1b1b" strokeWidth="1.300" strokeLinejoin="round" /></Svg></TrayButton>
      <TrayButton $w={28} aria-label="Głośność"><Svg w={20}><path d="M1 7.500h3.500L9 3.500v13l-4.500-4H1zM11.500 7.500q2 2.500 0 5" stroke="#1b1b1b" strokeWidth="1.300" strokeLinejoin="round" /><path d="M14 5q3.500 5 0 10M16.500 2.500q5 7.500 0 15" stroke="#b5b5b5" strokeWidth="1.200" /></Svg></TrayButton>
      <TrayButton $w={32} aria-label="Bateria"><Svg w={20}><rect x="1.700" y="5" width="15" height="10.500" rx="2" stroke="#111" strokeWidth="1.400" /><path d="M7 7h8v6.500H3.700zM18 8h1.500v4.500H18z" fill="#111" /><path d="M4 0L0 6h3L2 10l5-6H4z" fill="#111" stroke="#eee" strokeWidth=".5" /></Svg></TrayButton>
      <Clock>20:14<br />30.12.2024</Clock>
    </Tray>
  </Taskbar>
);

export default function App() {
  return (
    <>
      <GlobalStyle />
      <Desktop>
        <BrowserTabs />
        <BrowserToolbar />
        <Viewport>
          <Portal />
          <ScrollBar>
            <Svg w={13} h={10}><path d="M6.500 0q.8 0 1.300.8L12.800 9q.2 1-.8 1H1Q0 10 .2 9l5-8.200Q5.700 0 6.500 0z" fill="#8b8b8b" /></Svg>
            <Thumb />
            <Svg w={13} h={10}><path d="M6.500 10q.8 0 1.300-.8L12.800 1q.2-1-.8-1H1Q0 0 .2 1l5 8.200q.5.8 1.300.8z" fill="#8b8b8b" /></Svg>
          </ScrollBar>
          <StatusBubble>https://ssl.plusgsm.pl/ebok-web/spectrum/welcome.action#</StatusBubble>
          <ChatButton aria-label="Czat">
            <Svg w={32} h={30}><path d="M4 1h16a2.500 2.500 0 0 1 2.500 2.500v12A2.500 2.500 0 0 1 20 18H5l-4 4V3.500A2.500 2.500 0 0 1 4 1z" fill="#28e07f" /><path d="M25.500 8.500H29a2.500 2.500 0 0 1 2.500 2.500v17.500L27 25H13a2.500 2.500 0 0 1-2.500-2.500V21H23a2.500 2.500 0 0 0 2.500-2.500z" fill="#28e07f" /></Svg>
          </ChatButton>
        </Viewport>
        <WindowsTaskbar />
      </Desktop>
    </>
  );
}
